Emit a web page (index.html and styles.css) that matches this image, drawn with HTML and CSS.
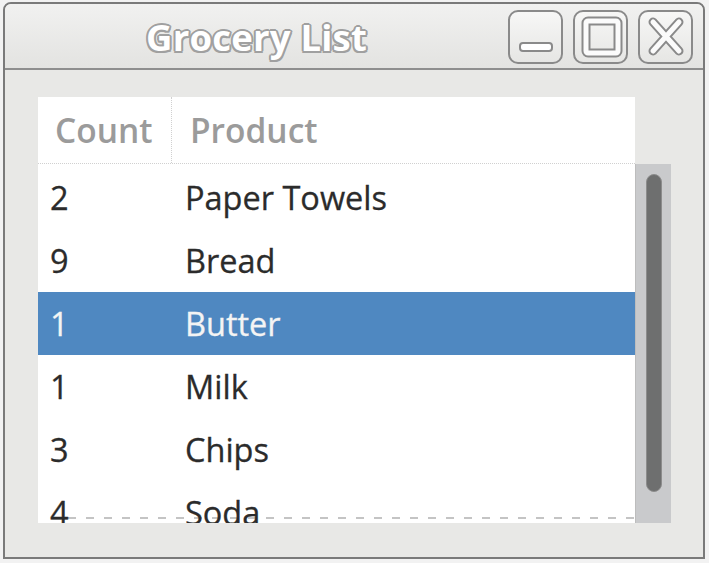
FILE: index.html
```html
<!DOCTYPE html>
<html>
<head>
<meta charset="utf-8">
<link rel="stylesheet" href="styles.css">
</head>
<body>
<div class="window">
  <div class="titlebar">
    <div class="title">Grocery List</div>
    <div class="buttons">
      <div class="wbtn">
        <svg width="50" height="50" viewBox="0 0 50 50">
          <rect x="9" y="31" width="32" height="8" rx="3" fill="#fff" stroke="#8a8a8a" stroke-width="2"/>
        </svg>
      </div>
      <div class="wbtn">
        <svg width="50" height="50" viewBox="0 0 50 50">
          <rect x="10" y="9" width="32" height="32" rx="2" fill="none" stroke="#8a8a8a" stroke-width="9"/>
          <rect x="10" y="9" width="32" height="32" rx="2" fill="none" stroke="#fbfbfb" stroke-width="5"/>
        </svg>
      </div>
      <div class="wbtn">
        <svg width="50" height="50" viewBox="0 0 50 50">
          <path d="M12 10 L38 39 M38 10 L12 39" stroke="#8a8a8a" stroke-width="9" stroke-linecap="round" fill="none"/>
          <path d="M12 10 L38 39 M38 10 L12 39" stroke="#fbfbfb" stroke-width="5" stroke-linecap="round" fill="none"/>
        </svg>
      </div>
    </div>
  </div>
  <div class="content">
    <div class="table">
      <div class="header">
        <div class="hcell hcount">Count</div>
        <div class="hcell hproduct">Product</div>
      </div>
      <div class="bodyrow">
        <div class="list">
          <div class="row"><div class="cnt">2</div><div class="prod">Paper Towels</div></div>
          <div class="row"><div class="cnt">9</div><div class="prod">Bread</div></div>
          <div class="row selected"><div class="cnt">1</div><div class="prod">Butter</div></div>
          <div class="row"><div class="cnt">1</div><div class="prod">Milk</div></div>
          <div class="row"><div class="cnt">3</div><div class="prod">Chips</div></div>
          <div class="row"><div class="cnt">4</div><div class="prod">Soda</div></div>
        </div>
        <div class="scrollbar"><div class="thumb"></div></div>
      </div>
    </div>
  </div>
</div>
</body>
</html>
```
FILE: styles.css
```css
html, body {
  margin: 0;
  padding: 0;
  background: #f2f2f2;
}
body {
  width: 709px;
  height: 563px;
  overflow: hidden;
  font-family: "Open Sans", "Noto Sans", sans-serif;
}
.window {
  margin: 2px 0 0 3px;
  width: 702px;
  height: 557px;
  box-sizing: border-box;
  border: 2px solid #7a7a7a;
  border-radius: 8px 8px 0 0;
  display: flex;
  flex-direction: column;
  overflow: hidden;
  background: #e8e8e6;
}
.titlebar {
  height: 64px;
  border-bottom: 2px solid #8e8e8e;
  background: linear-gradient(#f1f1f0, #e3e3e1);
  display: flex;
  align-items: center;
  padding-right: 10px;
}
.title {
  flex: 1;
  text-align: center;
  font-size: 36.5px;
  font-weight: 700;
  color: #ffffff;
  letter-spacing: 0.2px;
  text-shadow:
    -2px 0 0 #a0a0a0, 2px 0 0 #a0a0a0, 0 -2px 0 #a0a0a0, 0 2px 0 #a0a0a0,
    -1.5px -1.5px 0 #a0a0a0, 1.5px 1.5px 0 #a0a0a0, -1.5px 1.5px 0 #a0a0a0, 1.5px -1.5px 0 #a0a0a0;
  padding-top: 2px;
}
.buttons {
  display: flex;
  gap: 10px;
  margin-top: 2px;
}
.wbtn {
  width: 55px;
  height: 54px;
  box-sizing: border-box;
  border: 2px solid #8a8a8a;
  border-radius: 10px;
  background: linear-gradient(#f7f7f6, #e6e6e4);
  display: flex;
  align-items: center;
  justify-content: center;
}
.wbtn svg { display: block; }
.content {
  flex: 1;
  padding: 27px 0 0 33px;
}
.table {
  width: 633px;
  display: flex;
  flex-direction: column;
}
.header {
  width: 597px;
  height: 67px;
  box-sizing: border-box;
  background: #ffffff;
  border-bottom: 1px dotted #d0d0d0;
  display: flex;
}
.hcell {
  font-size: 33.5px;
  font-weight: 600;
  color: #9b9b9b;
  display: flex;
  align-items: center;
}
.hcount {
  width: 134px;
  box-sizing: border-box;
  padding-left: 17px;
  border-right: 1px dotted #d0d0d0;
}
.hproduct {
  padding-left: 18px;
}
.bodyrow {
  display: flex;
  height: 359px;
}
.list {
  width: 597px;
  background: #ffffff;
  padding-top: 2px;
  box-sizing: border-box;
  overflow: hidden;
  position: relative;
}
.list::after {
  content: "";
  position: absolute;
  left: 30px;
  right: 0;
  bottom: 4px;
  height: 2px;
  background: repeating-linear-gradient(90deg, #c4c4c4 0 8px, transparent 8px 18px);
}
.row {
  height: 63px;
  display: flex;
  align-items: center;
  font-size: 32.5px;
  font-weight: 500;
  color: #2b2b2b;
  -webkit-text-stroke: 0.3px currentColor;
  position: relative;
  z-index: 1;
}
.row.selected {
  background: #4f88c1;
  color: #f4f4f4;
}
.cnt {
  width: 134px;
  box-sizing: border-box;
  padding-left: 12px;
}
.prod {
  padding-left: 13px;
}
.scrollbar {
  width: 36px;
  background: #c9cacc;
  box-sizing: border-box;
  border-left: 1px solid #bdbdbd;
  padding: 10px 0 0 10px;
}
.thumb {
  width: 16px;
  height: 318px;
  box-sizing: border-box;
  border: 1px solid #8c8c8c;
  border-radius: 8px;
  background: #6e6f6f;
}
```
